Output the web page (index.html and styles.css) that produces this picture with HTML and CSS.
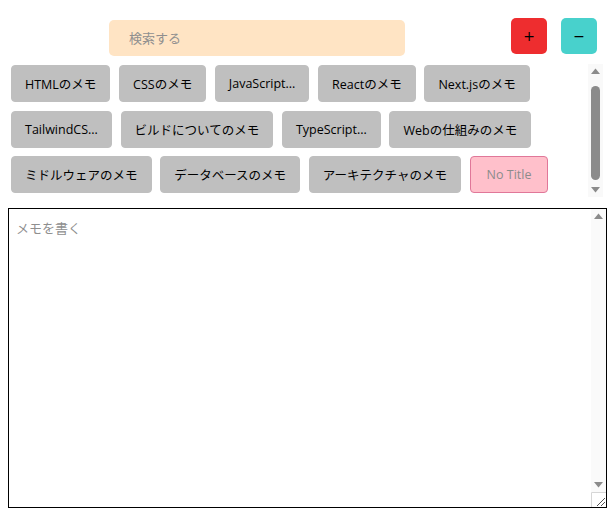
FILE: index.html
```html
<!DOCTYPE html>
<html lang="ja">
<head>
<meta charset="utf-8">
<title>メモ</title>
<link rel="stylesheet" href="styles.css">
</head>
<body>
<div class="header">
  <input class="search" type="text" placeholder="検索する">
  <button class="btn-add">+</button>
  <button class="btn-del">−</button>
</div>
<div class="list-wrap">
  <div class="list">
    <button class="memo">HTMLのメモ</button>
    <button class="memo">CSSのメモ</button>
    <button class="memo">JavaScript...</button>
    <button class="memo">Reactのメモ</button>
    <button class="memo">Next.jsのメモ</button>
    <button class="memo">TailwindCS...</button>
    <button class="memo">ビルドについてのメモ</button>
    <button class="memo">TypeScript...</button>
    <button class="memo">Webの仕組みのメモ</button>
    <button class="memo">ミドルウェアのメモ</button>
    <button class="memo">データベースのメモ</button>
    <button class="memo">アーキテクチャのメモ</button>
    <button class="memo memo-empty">No Title</button>
  </div>
  <div class="vscroll">
    <svg class="sb-btn" width="15" height="15" viewBox="0 0 15 15"><polygon points="3,10 7.5,4.5 12,10" fill="#8b8b8b"/></svg>
    <div class="sb-track"><div class="sb-thumb"></div></div>
    <svg class="sb-btn" width="15" height="15" viewBox="0 0 15 15"><polygon points="3,5 12,5 7.5,10.5" fill="#8b8b8b"/></svg>
  </div>
</div>
<div class="editor-wrap">
  <textarea class="editor" placeholder="メモを書く"></textarea>
  <div class="vscroll editor-scroll">
    <svg class="sb-btn" width="15" height="15" viewBox="0 0 15 15"><polygon points="3,10 7.5,4.5 12,10" fill="#8b8b8b"/></svg>
    <div class="sb-track"></div>
    <svg class="sb-btn" width="15" height="15" viewBox="0 0 15 15"><polygon points="3,5 12,5 7.5,10.5" fill="#8b8b8b"/></svg>
  </div>
</div>
</body>
</html>
```

FILE: styles.css
```css
html, body {
  background: #ffffff;
}
body {
  margin: 8px;
  font-family: "Open Sans", "Noto Sans CJK JP", sans-serif;
  font-size: 13px;
  color: #000;
}
.header {
  display: flex;
  align-items: flex-start;
  height: 48px;
}
.search {
  box-sizing: border-box;
  width: 296px;
  height: 36px;
  margin: 12px 0 0 101px;
  padding: 0 20px;
  border: none;
  border-radius: 5px;
  background: #ffe4c4;
  font-family: "Open Sans", "Noto Sans CJK JP", sans-serif;
  font-size: 13px;
  outline: none;
}
.search::placeholder {
  color: #8f8f8f;
}
.btn-add, .btn-del {
  width: 36px;
  height: 36px;
  margin-top: 10px;
  border: none;
  border-radius: 5px;
  font-family: "DejaVu Sans", sans-serif;
  font-size: 14px;
  color: #000;
  padding: 0;
}
.btn-add {
  margin-left: 106px;
  background: #ee2d2f;
}
.btn-del {
  margin-left: 14px;
  background: #48d1cc;
}
.list-wrap {
  display: flex;
  width: 595px;
  height: 133px;
  margin-top: 8px;
}
.list {
  flex: 1;
  overflow: hidden;
  padding: 1px 0 0 3px;
  display: flex;
  flex-wrap: wrap;
  align-content: flex-start;
  column-gap: 8.7px;
  row-gap: 8.5px;
}
.memo {
  height: 37px;
  padding: 0 13px;
  border: 1px solid #bfbfbf;
  border-radius: 4px;
  background: #bfbfbf;
  font-family: "Open Sans", "Noto Sans CJK JP", sans-serif;
  font-size: 12.5px;
  color: #000;
}
.memo-empty {
  padding: 0 16px;
  background: #ffc0cb;
  border-color: #e07799;
  color: #8c8c8c;
}

/* drawn scrollbar */
.vscroll {
  width: 15px;
  flex: none;
  display: flex;
  flex-direction: column;
  background: #f9f9f9;
}
.sb-btn {
  display: block;
  flex: none;
}
.sb-track {
  flex: 1;
  padding: 7px 3px 2px;
}
.sb-thumb {
  height: 94px;
  border-radius: 5px;
  background: #8b8b8b;
}

.editor-wrap {
  position: relative;
  width: 599px;
  height: 300px;
  margin-top: 11px;
}
.editor {
  display: block;
  box-sizing: border-box;
  width: 100%;
  height: 100%;
  padding: 9px 22px 9px 7px;
  border: 1px solid #000;
  font-family: "Open Sans", "Noto Sans CJK JP", sans-serif;
  font-size: 13px;
  resize: both;
}
.editor::placeholder {
  color: #8f8f8f;
}
.editor::-webkit-resizer {
  background: #ffffff url("data:image/svg+xml;utf8,<svg xmlns='http://www.w3.org/2000/svg' width='15' height='15'><path d='M0.5,15 V0.5 H15' fill='none' stroke='%23d6d6d6'/><path d='M6,14 L14,6 M10,14 L14,10' stroke='%23555' stroke-width='1'/></svg>") no-repeat;
}
.editor-scroll {
  position: absolute;
  top: 1px;
  right: 1px;
  bottom: 16px;
  background: #fafafa;
}
```
